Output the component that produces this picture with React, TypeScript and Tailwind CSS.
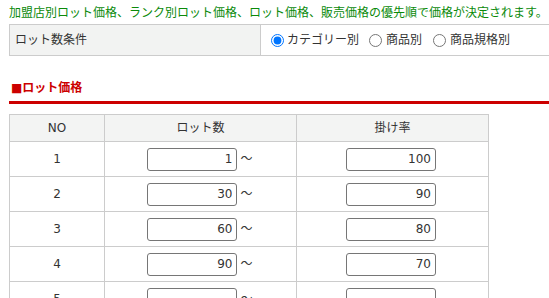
import React from 'react';

interface LotRow {
  no: number;
  lot: string;
  rate: string;
}

const rows: LotRow[] = [
  { no: 1, lot: '1', rate: '100' },
  { no: 2, lot: '30', rate: '90' },
  { no: 3, lot: '60', rate: '80' },
  { no: 4, lot: '90', rate: '70' },
  { no: 5, lot: '', rate: '' },
];

const fontStack = { fontFamily: '"DejaVu Sans", "Noto Sans CJK JP", sans-serif' };

const App: React.FC = () => {
  return (
    <div className="w-[549px] h-[298px] overflow-hidden bg-white text-[12px] text-[#333]" style={fontStack}>
      <div className="pt-[4px] pl-[9px] leading-[18px] whitespace-nowrap text-[#0a8a0a]">
        加盟店別ロット価格、ランク別ロット価格、ロット価格、販売価格の優先順で価格が決定されます。
      </div>

      {/* lot condition */}
      <div className="mt-[2px] ml-[9px] w-[600px] h-[32px] flex border border-[#ccc]">
        <div className="w-[251px] shrink-0 flex items-center pl-[5px] bg-[#f2f3f2] border-r border-[#ccc]">
          ロット数条件
        </div>
        <div className="flex items-center pl-[10px]">
          <label className="flex items-center">
            <input type="radio" name="lotType" defaultChecked className="m-0 w-[13px] h-[13px]" />
            <span className="ml-[3px]">カテゴリー別</span>
          </label>
          <label className="flex items-center ml-[10px]">
            <input type="radio" name="lotType" className="m-0 w-[13px] h-[13px]" />
            <span className="ml-[4px]">商品別</span>
          </label>
          <label className="flex items-center ml-[11px]">
            <input type="radio" name="lotType" className="m-0 w-[13px] h-[13px]" />
            <span className="ml-[4px]">商品規格別</span>
          </label>
        </div>
      </div>

      <h3 className="mt-[23px] ml-[11px] leading-[18px] font-bold text-[#cc0000]">■ロット価格</h3>
      <div className="mt-[4px] ml-[9px] h-[3px] bg-[#cc0000]" />

      {/* lot price table */}
      <div className="mt-[10px] ml-[9px] w-[480px] border-l border-t border-[#ccc]">
        <div className="flex h-[27px] bg-[#f3f4f3] border-b border-[#ccc]">
          <div className="w-[95px] flex items-center justify-center border-r border-[#ccc]">NO</div>
          <div className="w-[192px] flex items-center justify-center border-r border-[#ccc]">ロット数</div>
          <div className="w-[192px] flex items-center justify-center border-r border-[#ccc]">掛け率</div>
        </div>
        {rows.map((row) => (
          <div key={row.no} className="flex h-[35px] border-b border-[#ccc]">
            <div className="w-[95px] flex items-center justify-center border-r border-[#ccc]">{row.no}</div>
            <div className="w-[192px] flex items-center justify-center border-r border-[#ccc]">
              <input
                type="text"
                defaultValue={row.lot}
                className="w-[90px] h-[23px] border border-[#767676] rounded-[3px] text-right pr-[4px] text-[12px] text-[#333]"
                style={fontStack}
              />
              <span className="ml-[3px] mr-[1px]">〜</span>
            </div>
            <div className="w-[192px] flex items-center justify-center border-r border-[#ccc]">
              <input
                type="text"
                defaultValue={row.rate}
                className="w-[90px] h-[23px] mr-[3px] border border-[#767676] rounded-[3px] text-right pr-[4px] text-[12px] text-[#333]"
                style={fontStack}
              />
            </div>
          </div>
        ))}
      </div>
    </div>
  );
};

export default App;
